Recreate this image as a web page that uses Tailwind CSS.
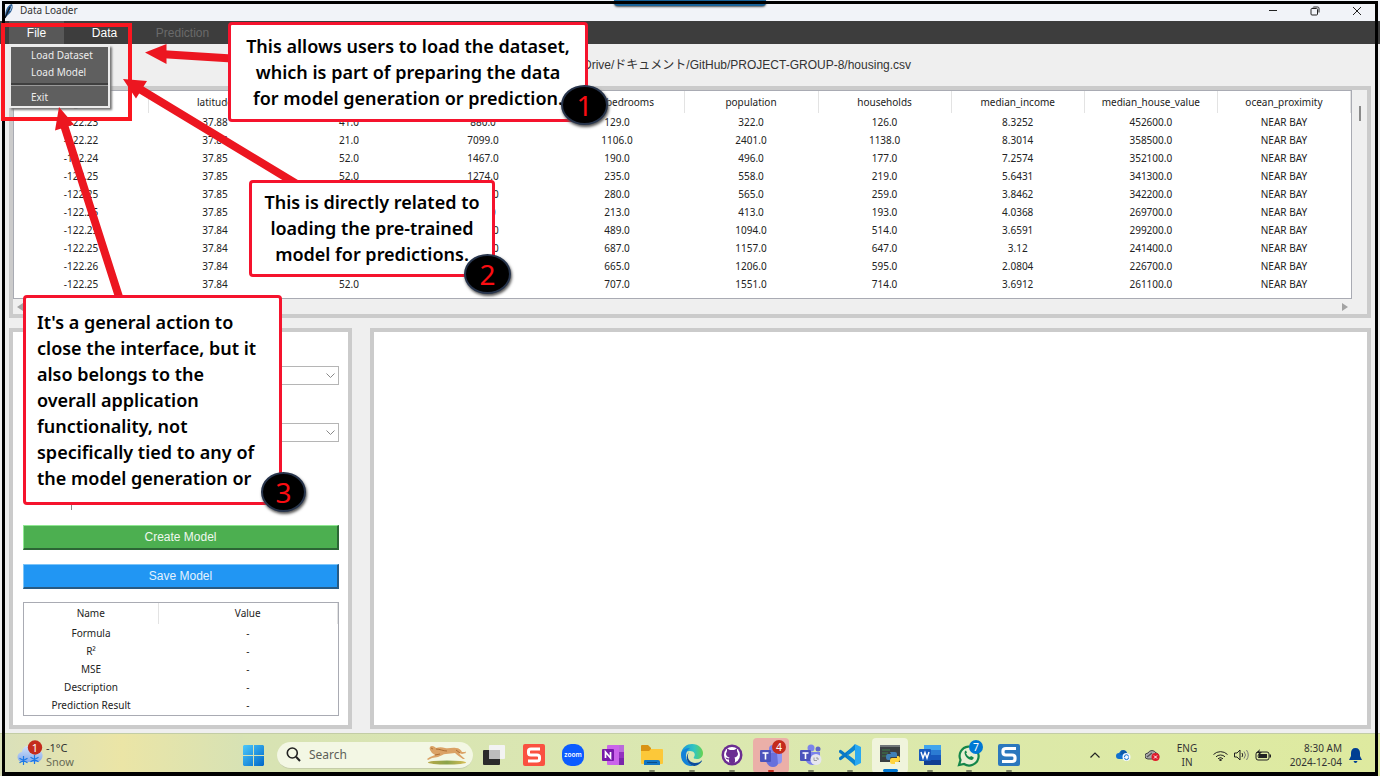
<!DOCTYPE html>
<html lang="en">
<head>
<meta charset="utf-8">
<title>Data Loader</title>
<script src="https://cdn.jsdelivr.net/npm/@tailwindcss/browser@4"></script>
</head>
<body class="relative flex min-h-screen flex-col overflow-x-hidden bg-[#efefef] font-['Noto_Sans','Noto_Sans_CJK_JP',sans-serif] text-[11px] text-[#222]">

<!-- Title bar -->
<header class="flex h-[21px] shrink-0 items-center bg-[#f1f3f8] pr-[18px] pl-1 text-[#333]">
  <svg class="h-4 w-3" viewBox="0 0 12 16"><path d="M1 15C1 8 3 2 8 1c2 4-1 9-4 11z" fill="#2d5f96"/><path d="M1 15 6 4M3 10l3-5" stroke="#101820" stroke-width="1.3" fill="none"/><path d="M6 8 8 3" stroke="#9fc4e8" stroke-width="1"/></svg>
  <h1 class="ml-1 text-[10px]">Data Loader</h1>
  <div class="ml-auto flex items-center gap-[32px]">
    <button aria-label="Minimize"><svg class="h-[10px] w-[10px]" viewBox="0 0 10 10"><path d="M1 4.500h8" stroke="#222" stroke-width="1"/></svg></button>
    <button aria-label="Restore"><svg class="h-[10px] w-[10px]" viewBox="0 0 10 10" fill="none" stroke="#222"><rect x="1" y="2.5" width="6.5" height="6.5" rx="1"/><path d="M3 1.5C3 1 3.5 1 4 1h3.500C8.500 1 9 1.500 9 2.500V6.500"/></svg></button>
    <button aria-label="Close"><svg class="h-[10px] w-[10px]" viewBox="0 0 10 10"><path d="M1 1l8 8M9 1l-8 8" stroke="#222" stroke-width="1"/></svg></button>
  </div>
</header>

<!-- Menu bar -->
<nav class="flex h-[23px] shrink-0 items-stretch bg-[#3d3d3d] pl-[9px] font-['Liberation_Sans',sans-serif] text-xs text-white">
  <button class="w-[55px] bg-[#585858]">File</button>
  <button class="w-[81px]">Data</button>
  <button class="w-[75px] text-[#6a6a6a]" disabled>Prediction</button>
</nav>

<!-- Path of the loaded file -->
<div class="flex h-[42px] shrink-0 items-center pl-[583px] font-['Liberation_Sans','Noto_Sans_CJK_JP',sans-serif] text-xs text-[#333]">
  <p class="whitespace-nowrap">Drive/ドキュメント/GitHub/PROJECT-GROUP-8/housing.csv</p>
</div>

<main class="flex grow flex-col gap-[10px] pr-[9px] pb-1 pl-[9px]">
  <!-- Dataset -->
  <section class="grid grid-cols-[1fr_15px] border-4 border-[#cbcbcb]" aria-label="Dataset">
    <div class="h-[209px] border border-[#a9abb3] bg-white">
      <table class="w-full table-fixed border-collapse text-center text-[10px]">
        <colgroup><col span="6" class="w-[134px]"><col span="4"></colgroup>
        <thead><tr id="heads" class="h-[22px]"></tr></thead>
        <tbody id="rows"></tbody>
      </table>
    </div>
    <div class="flex justify-center pt-[16px]"><div class="h-[15px] w-[2px] bg-[#8a8a8a]"></div></div>
    <div class="flex h-[15px] items-center justify-between px-1">
      <svg class="h-2 w-[6px]" viewBox="0 0 6 8"><path d="M6 0v8L0 4z" fill="#a3a3a3"/></svg>
      <svg class="h-2 w-[6px]" viewBox="0 0 6 8"><path d="M0 0v8l6-4z" fill="#a3a3a3"/></svg>
    </div>
  </section>

  <div class="flex grow gap-[18px]">
    <!-- Model form -->
    <section class="flex w-[343px] shrink-0 flex-col border-4 border-[#cbcbcb] bg-white pt-[34px] pr-[9px] pb-[9px] pl-[10px]" aria-label="Model">
      <div class="relative">
        <select aria-label="Input column" class="block h-[19px] w-full appearance-none border border-[#b5b5b5] bg-white"><option></option></select>
        <svg class="pointer-events-none absolute top-[6px] right-1 h-[7px] w-[9px]" viewBox="0 0 9 7"><path d="M.5 1.500l4 4 4-4" fill="none" stroke="#888"/></svg>
      </div>
      <div class="relative mt-[38px]">
        <select aria-label="Output column" class="block h-[19px] w-full appearance-none border border-[#b5b5b5] bg-white"><option></option></select>
        <svg class="pointer-events-none absolute top-[6px] right-1 h-[7px] w-[9px]" viewBox="0 0 9 7"><path d="M.5 1.500l4 4 4-4" fill="none" stroke="#888"/></svg>
      </div>
      <div class="mt-[48px] ml-[48px] h-5 w-px bg-[#888]"></div>
      <button class="mt-[15px] h-[25px] border border-t-[#8fe892] border-r-2 border-r-[#2c6635] border-b-2 border-b-[#2c6635] border-l-[#8fe892] bg-[#4caf50] font-['Liberation_Sans',sans-serif] text-xs text-[#eef8ee]">Create Model</button>
      <button class="mt-[14px] h-[25px] border border-t-[#7cc4f8] border-r-2 border-r-[#285a82] border-b-2 border-b-[#285a82] border-l-[#7cc4f8] bg-[#2196f3] font-['Liberation_Sans',sans-serif] text-xs text-[#e4f2fe]">Save Model</button>
      <div class="mt-[13px] grow border border-[#a9abb3]">
        <table class="w-full table-fixed border-collapse text-center text-[10px]">
          <colgroup><col class="w-[134px]"><col></colgroup>
          <thead><tr class="h-[21px]"><th class="border-r border-[#e3e3e3] p-0 font-normal">Name</th><th class="border-r border-[#e3e3e3] p-0 font-normal">Value</th></tr></thead>
          <tbody>
            <tr class="h-[18px]"><td class="p-0">Formula</td><td class="p-0">-</td></tr>
            <tr class="h-[18px]"><td class="p-0">R²</td><td class="p-0">-</td></tr>
            <tr class="h-[18px]"><td class="p-0">MSE</td><td class="p-0">-</td></tr>
            <tr class="h-[18px]"><td class="p-0">Description</td><td class="p-0">-</td></tr>
            <tr class="h-[18px]"><td class="p-0">Prediction Result</td><td class="p-0">-</td></tr>
          </tbody>
        </table>
      </div>
    </section>
    <!-- Chart area -->
    <section class="grow border-4 border-[#cbcbcb] bg-white" aria-label="Chart"></section>
  </div>
</main>

<!-- Taskbar -->
<footer class="flex h-[43px] shrink-0 items-center border-t border-[#c3cda5] bg-linear-to-r from-[#d6e0b4] via-[#dbe8b1] to-[#deea9f] pr-[18px] pl-[17px] text-[#333]">
  <div class="-ml-[17px] flex h-full w-[243px] shrink-0 items-center bg-linear-to-r from-[#d9e0bb] via-[#ebe5a6] to-[#d7e2b4] pl-[17px]">
    <svg class="h-[30px] w-[26px]" viewBox="0 0 26 30"><defs><linearGradient id="cl" x2="0" y2="1"><stop stop-color="#d3e3fb"/><stop offset="1" stop-color="#86abea"/></linearGradient></defs><path d="M6 22a5 5 0 0 1-1-10A7 7 0 0 1 18 9a6 6 0 0 1 2 13z" fill="url(#cl)"/><g stroke="#1a78e6" stroke-width="1.200"><path d="M6.500 16v9M2.500 18.200l8 4.600M10.500 18.200l-8 4.600M17.500 15v9M13.500 17.200l8 4.600M21.500 17.200l-8 4.600"/></g><circle cx="18" cy="7.500" r="7.200" fill="#c42b1c"/><text x="18" y="11.500" font-size="11" fill="#fff" text-anchor="middle">1</text></svg>
    <p class="ml-[3px] text-[11px] leading-[14px]">-1°C<br><span class="text-[#686b55]">Snow</span></p>
  </div>
  <button aria-label="Start" class="shrink-0"><svg class="h-[21px] w-[21px]" viewBox="0 0 21 21"><defs><linearGradient id="wn" x2="1" y2="1"><stop stop-color="#4cc9fb"/><stop offset="1" stop-color="#0067c8"/></linearGradient></defs><path d="M1 0h9v10H0V1zM11 0h9l1 1v9H11zM0 11h10v10H1l-1-1zM11 11h10v9l-1 1h-9z" fill="url(#wn)"/></svg></button>
  <div class="ml-[13px] flex h-[27px] w-[196px] shrink-0 items-center rounded-full border-b border-[#c5cda9] bg-[#f3f7e4] pr-1 pl-[9px]">
    <svg class="h-[15px] w-[15px] shrink-0" viewBox="0 0 15 15" fill="none" stroke="#222" stroke-width="1.600"><circle cx="6.300" cy="6" r="5"/><path d="M10 9.800l4 4.200" stroke-width="2"/></svg>
    <input aria-label="Search" placeholder="Search" class="ml-2 w-[118px] bg-transparent text-xs outline-none placeholder:text-[#5d5f58]">
    <svg class="h-5 w-10 shrink-0" viewBox="0 0 40 20"><defs><linearGradient id="gr"><stop stop-color="#b9a94a"/><stop offset=".5" stop-color="#8aa34a"/><stop offset="1" stop-color="#d8bd55"/></linearGradient></defs><ellipse cx="20" cy="17.500" rx="19" ry="2" fill="url(#gr)"/><path d="M3 5c-1-2 0-4 2-4s3 1 4 2c3-1 6-1 9 0 4 1 7-1 11 0 3 0 5 2 6 4l3 0 0-1 1 2-4 1-3-1c1 2 4 4 6 6l-2 0c-3-2-6-4-8-6-3 0-6 1-9 1-3 0-5 2-8 3L5 13l-4 2-1-1 3-2 5-2-3-2z" fill="#dba266"/><path d="M9 4c4 0 7 2 11 2M29 5l4 3M8 10l5-1M4 3l2 1" stroke="#a9692f" fill="none" stroke-width=".9"/></svg>
  </div>

  <div class="ml-[3px] flex h-full w-[551px] shrink-0 items-center justify-between">
    <a href="#" aria-label="Task view" class="flex h-[35px] w-9 items-center justify-center"><svg class="h-[22px] w-[22px]" viewBox="0 0 22 22"><rect x="0" y="6" width="17" height="15" rx="1" fill="#2b2b2b"/><rect x="6" y="1" width="16" height="14" rx="1" fill="#f3f3f3"/><path d="M6 6h11v9H6z" fill="#bcbcbc"/></svg></a>
    <a href="#" aria-label="Snagit" class="flex h-[35px] w-9 items-center justify-center"><svg class="h-[22px] w-[22px]" viewBox="0 0 22 22"><rect width="22" height="22" rx="2" fill="#fa5140"/><path d="M17 5H8Q5.500 5 5.500 7v2q0 2 2.500 2h6q2.500 0 2.500 2v2q0 2-2.500 2H5" fill="none" stroke="#fff" stroke-width="3"/></svg></a>
    <a href="#" aria-label="Zoom" class="flex h-[35px] w-9 items-center justify-center"><svg class="h-[22px] w-[22px]" viewBox="0 0 22 22"><rect width="22" height="22" rx="9" fill="#0b5cff"/><text x="11" y="13" font-size="6.500" font-weight="600" fill="#fff" text-anchor="middle">zoom</text></svg></a>
    <a href="#" aria-label="OneNote" class="flex h-[35px] w-9 items-center justify-center"><svg class="h-[22px] w-[22px]" viewBox="0 0 22 22"><rect x="5" y="1" width="17" height="20" rx="1" fill="#ca64ea"/><path d="M17 1h5v7h-5z" fill="#ba69db"/><path d="M17 8h5v6h-5z" fill="#9332bf"/><path d="M17 14h5v7h-5z" fill="#7a25ab"/><rect x="0" y="5" width="12" height="12" rx="1" fill="#7719aa"/><path d="M3.500 14V8l5 6V8" fill="none" stroke="#fff" stroke-width="1.700"/></svg></a>
    <a href="#" aria-label="File Explorer" class="relative flex h-[35px] w-9 items-center justify-center"><svg class="h-[22px] w-[22px]" viewBox="0 0 22 22"><path d="M0 2q0-1 1-1h6l3 3v5H0z" fill="#d99313"/><path d="M0 7h8l2-2h11q1 0 1 1v13q0 1-1 1H1q-1 0-1-1z" fill="#fcc839"/><path d="M3 21v-4q0-1 1-1h13q2 0 2 2v3z" fill="#1276c4"/><path d="M6 18.500h10" stroke="#094d87"/></svg><span class="absolute bottom-px h-[2px] w-[6px] rounded bg-[#7d8464]"></span></a>
    <a href="#" aria-label="Edge" class="relative flex h-[35px] w-9 items-center justify-center"><svg class="h-[22px] w-[22px]" viewBox="0 0 22 22"><defs><linearGradient id="ed"><stop stop-color="#1696dc"/><stop offset=".6" stop-color="#32c5c0"/><stop offset="1" stop-color="#65d34e"/></linearGradient></defs><path d="M0 10C1 3 6 0 11 0c7 0 11 5 11 9 0 4-3 6-6 6-3 0-4-1-3-2 2-3 0-6-4-6-5 0-9 3-9 3z" fill="url(#ed)"/><path d="M0 11c0-4 4-7 9-7-3 2-4 5-4 8 0 5 4 9 8 10C5 23 0 18 0 11z" fill="#1282d8"/><path d="M8 8c-3 5 0 11 6 11 3 0 5-1 6-2 1-1 1 0 1 0-3 5-8 5-8 5-6-1-10-8-5-14z" fill="#0c4c9c"/></svg><span class="absolute bottom-px h-[2px] w-[6px] rounded bg-[#7d8464]"></span></a>
    <a href="#" aria-label="GitHub Desktop" class="relative flex h-[35px] w-9 items-center justify-center"><svg class="h-[22px] w-[22px]" viewBox="0 0 22 22"><circle cx="11" cy="11" r="10.500" fill="#6b2d91"/><circle cx="11" cy="11" r="8" fill="#fff"/><path d="M8 18.500v-3c-2 0-3-.5-3.500-2 2 0 2 1 3.500 1l.5-1C6 13 5 11.500 5 9.500L6 7V4.500l3 1.500h4l3-1.500V7l1 2.500c0 2-1 3.500-3.500 4l.5 1.500v3.500a8 8 0 0 1-6 0z" fill="#6b2d91"/></svg><span class="absolute bottom-px h-[2px] w-[6px] rounded bg-[#7d8464]"></span></a>
    <a href="#" aria-label="Teams, 4 notifications" class="relative flex h-[35px] w-9 items-center justify-center rounded bg-[#ebafa8]"><svg class="h-[30px] w-[30px]" viewBox="0 0 30 30"><circle cx="17" cy="9" r="4" fill="#7b83eb"/><path d="M10 13h13v8q-1 6-6 6-5 0-7-6z" fill="#6870dc"/><path d="M21 13h5v7q0 4-4 4z" fill="#8e97f2"/><rect x="4" y="10" width="11" height="12" rx="1" fill="#4b53bc"/><path d="M6.500 13h6M9.500 13v6.500" stroke="#fff" stroke-width="1.600"/><circle cx="23" cy="7" r="7" fill="#c42b1c"/><text x="23" y="11" font-size="10.500" fill="#fff" text-anchor="middle">4</text></svg><span class="absolute bottom-px h-[2px] w-[6px] rounded bg-[#c42b1c]"></span></a>
    <a href="#" aria-label="Teams for work" class="relative flex h-[35px] w-9 items-center justify-center"><svg class="h-[22px] w-[24px]" viewBox="0 0 24 22"><circle cx="12" cy="4" r="3.500" fill="#7b83eb"/><circle cx="19" cy="5" r="2.500" fill="#6068c9"/><path d="M7 8h14v9q-2 4-7 4-5 0-7-4z" fill="#7b83eb"/><rect x="1" y="6" width="11" height="11" rx="1" fill="#4b53bc"/><path d="M3.500 9h6M6.500 9v6" stroke="#fff" stroke-width="1.600"/><circle cx="17" cy="15.500" r="5.500" fill="#e6e6ef"/><path d="M15 13.500v3h3M17 14h2v2" stroke="#888" fill="none" stroke-width=".8"/></svg><span class="absolute bottom-px h-[2px] w-[6px] rounded bg-[#7d8464]"></span></a>
    <a href="#" aria-label="Visual Studio Code" class="relative flex h-[35px] w-9 items-center justify-center"><svg class="h-[22px] w-[22px]" viewBox="0 0 22 22"><path d="M1.500 7.500 16 19M1.500 14.500 16 3" stroke="#0878c6" stroke-width="3.200" stroke-linecap="round"/><path d="M16 0l6 3v16l-6 3z" fill="#29a9f2"/><path d="M16 0 7.500 9l2 2L16 6zM16 22 7.500 13l2-2L16 16z" fill="#0b86d3"/></svg><span class="absolute bottom-px h-[2px] w-[6px] rounded bg-[#7d8464]"></span></a>
    <a href="#" aria-label="Python" class="relative flex h-[35px] w-9 items-center justify-center rounded bg-[#f0f4dc]"><svg class="h-[22px] w-[22px]" viewBox="0 0 22 22"><rect x="1" y="1" width="20" height="17" fill="#3a3f42"/><path d="M1 1h20v2H1z" fill="#707679"/><path d="M3 6h8M3 9h6M3 12h4" stroke="#3d7f48"/><path d="M11 8h5q2 0 2 2v3h-6q-1 0-1 2v1H9q-2 0-2-3t2-3h3z" fill="#3f7fb7"/><path d="M18 12h1q2 0 2 3t-2 3h-3v2h-3q-2 0-2-2v-2q0-2 2-2h5z" fill="#ffd43f"/></svg><span class="absolute bottom-px h-[3px] w-[15px] rounded bg-[#0078d4]"></span></a>
    <a href="#" aria-label="Word" class="relative flex h-[35px] w-9 items-center justify-center"><svg class="h-[22px] w-[22px]" viewBox="0 0 22 22"><rect x="5" y="1" width="17" height="20" rx="1" fill="#2b7cd3"/><path d="M5 1h17v5H5z" fill="#41a5ee"/><path d="M5 11h17v5H5z" fill="#185abd"/><path d="M5 16h17v5H5z" fill="#103f91"/><rect x="0" y="5" width="12" height="12" rx="1" fill="#185abd"/><path d="M2 8l2 6 2-5.500L8 14l2-6" fill="none" stroke="#fff" stroke-width="1.400"/></svg><span class="absolute bottom-px h-[2px] w-[6px] rounded bg-[#7d8464]"></span></a>
    <a href="#" aria-label="WhatsApp, 7 notifications" class="relative flex h-[35px] w-9 items-center justify-center"><svg class="h-[30px] w-[30px]" viewBox="0 0 30 30"><path d="M5 25l1.500-5A9.500 9.500 0 1 1 10 24z" fill="#e8eed2" stroke="#14864a" stroke-width="2.200"/><path d="M11 11c-2 4 3 9 7 9 2-1 2-3 1-3l-2-1-1 1c-2-.5-3-2-4-3.500l1-1-1-2z" fill="#14864a"/><circle cx="22" cy="7" r="7" fill="#0078d4"/><text x="22" y="11" font-size="10.500" fill="#fff" text-anchor="middle">7</text></svg><span class="absolute bottom-px h-[2px] w-[6px] rounded bg-[#7d8464]"></span></a>
    <a href="#" aria-label="Snagit Editor" class="relative flex h-[35px] w-9 items-center justify-center"><svg class="h-[22px] w-[22px]" viewBox="0 0 22 22"><rect width="22" height="22" rx="2" fill="#2b78bd"/><path d="M18 4.500H8Q5 4.500 5 7v1.500Q5 11 8 11h6q3 0 3 2.500V15q0 2.500-3 2.500H4" fill="none" stroke="#fff" stroke-width="3.200"/></svg><span class="absolute bottom-px h-[2px] w-[6px] rounded bg-[#7d8464]"></span></a>
  </div>

  <div class="ml-auto flex items-center">
    <svg class="h-[6px] w-[10px]" viewBox="0 0 10 6"><path d="M.5 5.500 5 1l4.500 4.500" fill="none" stroke="#222" stroke-width="1.200"/></svg>
    <svg class="ml-4 h-3 w-[15px]" viewBox="0 0 15 12"><path d="M3 10a3 3 0 0 1 0-6 4.500 4.500 0 0 1 8 0c3 0 4 6 1 6z" fill="#1071cf"/><path d="M5 1.500C8 0 11 2 11 4L4 6z" fill="#0c59a8"/><circle cx="10.500" cy="8" r="4" fill="#f4f8ff"/><path d="M8.500 8a2 2 0 0 1 4-.5M12.500 8.500a2 2 0 0 1-4 .3" fill="none" stroke="#1071cf"/></svg>
    <svg class="ml-[14px] h-3 w-[15px]" viewBox="0 0 15 12"><path d="M3 10a3 3 0 0 1 0-6 4.500 4.500 0 0 1 8 0c3 0 4 6 1 6z" fill="#aaa" stroke="#444"/><path d="M2 8l5-4" stroke="#555" stroke-width="1.500"/><circle cx="10.500" cy="8" r="4" fill="#e01b2b"/><path d="M9 6.500l3 3M12 6.500l-3 3" stroke="#fff"/></svg>
    <p class="ml-4 w-[22px] text-center text-[10px] leading-[14px]">ENG<br>IN</p>
    <svg class="ml-[15px] h-[11px] w-[15px]" viewBox="0 0 15 11" fill="none" stroke="#222"><path d="M.5 4.500a10 10 0 0 1 14 0M3 6.800a6.500 6.500 0 0 1 9 0M5 8.800a3.500 3.500 0 0 1 5 0"/><circle cx="7.500" cy="10" r=".8" fill="#222"/></svg>
    <svg class="ml-[6px] h-3 w-[15px]" viewBox="0 0 15 12" fill="none" stroke="#222"><path d="M.5 4v4H3l3 3V1L3 4zM8 4q1.500 2 0 4"/><path d="M10 2.500q3 3.500 0 7M12.500 1q3.500 5 0 10" stroke="#777"/></svg>
    <svg class="ml-[6px] h-3 w-4" viewBox="0 0 16 12"><rect x="1" y="3" width="13" height="8" rx="2" fill="none" stroke="#222"/><path d="M4 5h8v4H3zM14.500 5.500H16v3h-1.500z" fill="#222"/><path d="M5 0 1 4h3L2 8l5-5H4z" fill="#222"/></svg>
    <p class="ml-[13px] w-[58px] text-right text-[10px] leading-[14px] whitespace-nowrap">8:30 AM<br>2024-12-04</p>
    <svg class="ml-[7px] h-[15px] w-[13px]" viewBox="0 0 13 15"><path d="M6.500 0C9.500 0 11 2 11 5v3l2 4H0l2-4V5c0-3 1.500-5 4.500-5zM4.500 13h4q-.5 2-2 2t-2-2z" fill="#003e92"/></svg>
  </div>
</footer>

<!-- Opened File menu -->
<div role="menu" class="absolute top-[45px] left-[9px] w-[101px] border-2 border-[#ececec] bg-[#5f5f5f] text-[10px] text-[#ededed] shadow-[2px_2px_2px_#777]">
  <button role="menuitem" class="block h-[17px] w-full pl-5 text-left leading-[17px] whitespace-nowrap">Load Dataset</button>
  <button role="menuitem" class="block h-[17px] w-full pl-5 text-left leading-[17px] whitespace-nowrap">Load Model</button>
  <hr class="mt-[2px] mb-[3px] border-t-2 border-[#3f3f3f] border-b border-b-[#999]">
  <button role="menuitem" class="block h-[17px] w-full pl-5 text-left leading-[17px]">Exit</button>
</div>

<!-- Tab peeking in from above, and the frame round the window -->
<div class="absolute top-0 left-[614px] h-[6px] w-[152px] rounded-b bg-[#1a6297] shadow-[0_1px_2px_#555]"></div>
<div class="pointer-events-none absolute inset-x-[2px] top-px bottom-0 border-[3px] border-b-4 border-black"></div>

<!-- Annotations -->
<div class="pointer-events-none absolute top-[23px] left-[1px] h-[98px] w-[131px] border-4 border-[#fb1620]"></div>
<svg class="pointer-events-none absolute top-0 left-0 h-[320px] w-[320px]" viewBox="0 0 320 320" fill="#ec1620" stroke="#ec1620">
  <path d="M160 54 232 58.500M138 88 300 186M64 125 120 300" stroke-width="8"/>
  <path d="M145 52.500 166.500 44v20zM123 79l24 2-11 17.500zM59 107l-4 23.500 19-6z" stroke="none"/>
</svg>
<div class="absolute top-[22px] left-[228px] w-[360px] rounded border-[3px] border-[#f5132d] bg-white pt-[8px] pb-2 text-center font-['Noto_Sans',sans-serif] text-[18px] leading-[26px] font-semibold whitespace-nowrap text-black">
  <p>This allows users to load the dataset,<br>which is part of preparing the data<br>for model generation or prediction.</p>
  <span class="absolute -right-[23px] -bottom-[6px] flex h-10 w-[47px] items-center justify-center rounded-[50%] border-2 border-[#27344b] bg-black text-[28px] font-normal text-[#fb0d12] shadow-[1px_2px_3px_#555]">1</span>
</div>
<div class="absolute top-[180px] left-[249px] w-[246px] rounded border-[3px] border-[#f5132d] bg-white pt-[6px] pb-[7px] text-center font-['Noto_Sans',sans-serif] text-[18px] leading-[26px] font-semibold whitespace-nowrap text-black">
  <p>This is directly related to<br>loading the pre-trained<br>model for predictions.</p>
  <span class="absolute -right-[19px] -bottom-[20px] flex h-10 w-[47px] items-center justify-center rounded-[50%] border-2 border-[#27344b] bg-black text-[28px] font-normal text-[#fb0d12] shadow-[1px_2px_3px_#555]">2</span>
</div>
<div class="absolute top-[295px] left-[23px] w-[259px] rounded border-[3px] border-[#f5132d] bg-white pt-[11px] pb-[11px] pl-[11px] font-['Noto_Sans',sans-serif] text-[18px] leading-[26px] font-semibold whitespace-nowrap text-black">
  <p>It's a general action to<br>close the interface, but it<br>also belongs to the<br>overall application<br>functionality, not<br>specifically tied to any of<br>the model generation or</p>
  <span class="absolute -right-[27px] -bottom-[10px] flex h-10 w-[45px] items-center justify-center rounded-[50%] border-2 border-[#27344b] bg-black text-[28px] font-normal text-[#fb0d12] shadow-[1px_2px_3px_#555]">3</span>
</div>

<script>
const heads = ["longitude","latitude","","","total_bedrooms","population","households","median_income","median_house_value","ocean_proximity"];
const data = [
  ["-122.23","37.88","41.0","880.0","129.0","322.0","126.0","8.3252","452600.0"],
  ["-122.22","37.86","21.0","7099.0","1106.0","2401.0","1138.0","8.3014","358500.0"],
  ["-122.24","37.85","52.0","1467.0","190.0","496.0","177.0","7.2574","352100.0"],
  ["-122.25","37.85","52.0","1274.0","235.0","558.0","219.0","5.6431","341300.0"],
  ["-122.25","37.85","","1627.0","280.0","565.0","259.0","3.8462","342200.0"],
  ["-122.25","37.85","","919.0","213.0","413.0","193.0","4.0368","269700.0"],
  ["-122.25","37.84","","2535.0","489.0","1094.0","514.0","3.6591","299200.0"],
  ["-122.25","37.84","","3104.0","687.0","1157.0","647.0","3.12","241400.0"],
  ["-122.26","37.84","","","665.0","1206.0","595.0","2.0804","226700.0"],
  ["-122.25","37.84","52.0","","707.0","1551.0","714.0","3.6912","261100.0"]
];
document.getElementById("heads").innerHTML = heads.map(h => `<th class="border-r border-[#e3e3e3] p-0 font-normal">${h}</th>`).join("");
document.getElementById("rows").innerHTML = data.map(r => `<tr class="h-[18px]">${[...r, "NEAR BAY"].map(v => `<td class="p-0">${v}</td>`).join("")}</tr>`).join("");
</script>
</body>
</html>
